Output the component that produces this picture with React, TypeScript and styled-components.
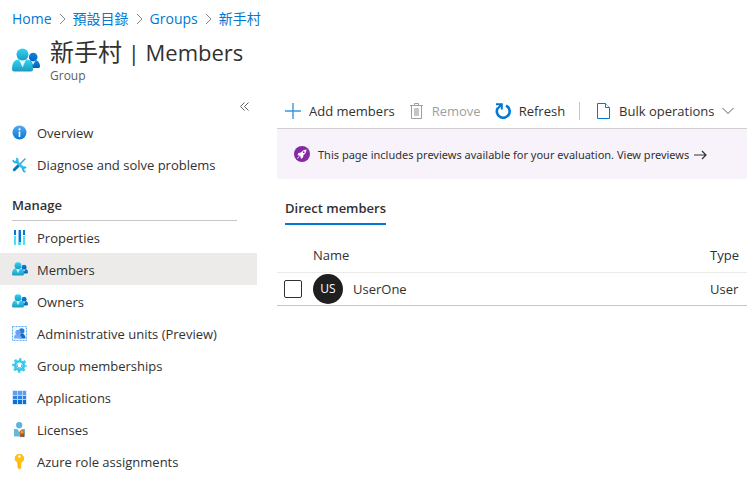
import React from "react";
import styled, { createGlobalStyle } from "styled-components";

const GlobalStyle = createGlobalStyle`
  *, *::before, *::after { box-sizing: border-box; }
  body {
    margin: 0;
    background: #fff;
    color: #323130;
    font-family: "Open Sans", "Noto Sans CJK TC", sans-serif;
    font-size: 13px;
    line-height: 20px;
    overflow-x: hidden;
  }
  button { font: inherit; color: inherit; background: none; border: 0; padding: 0; cursor: pointer; }
  a { color: inherit; text-decoration: none; }
  svg { display: block; flex: none; }
`;

const Breadcrumb = styled.nav`
  display: flex;
  align-items: center;
  gap: 7px;
  height: 38px;
  padding: 0 12px;
  color: #0078d4;
  font-size: 14px;
`;

const Header = styled.header`
  display: flex;
  align-items: flex-start;
  gap: 10px;
  height: 58px;
  padding-left: 12px;
`;

const HeaderIcon = styled.div`
  padding-top: 10px;
`;

const Title = styled.h1`
  margin: 0;
  font-size: 24px;
  line-height: 28px;
  font-weight: 400;
`;

const TitleSection = styled.span`
  font-size: 22px;
`;

const Subtitle = styled.div`
  font-size: 12px;
  line-height: 20px;
  color: #605e5c;
`;

const Body = styled.div`
  display: flex;
  align-items: flex-start;
  gap: 20px;
`;

const Sidebar = styled.nav`
  flex: none;
  width: 257px;
`;

const CollapseRow = styled.div`
  display: flex;
  justify-content: flex-end;
  height: 20px;
  padding-right: 7px;
`;

const NavItem = styled.a<{ $active?: boolean }>`
  display: flex;
  align-items: center;
  gap: 9px;
  height: 32px;
  padding: 2px 12px 0;
  background: ${(p) => (p.$active ? "#edebe9" : "transparent")};
`;

const NavHeading = styled.h2`
  margin: 0 20px 0 12px;
  padding-top: 15px;
  height: 41px;
  border-bottom: 1px solid #c8c6c4;
  font-size: 13px;
  line-height: 20px;
  font-weight: 600;
`;

const Main = styled.main`
  flex: 1;
  min-width: 0;
`;

const Toolbar = styled.div`
  display: flex;
  align-items: center;
  height: 33px;
  padding: 0 0 3px 8px;
  border-bottom: 1px solid #d2d0ce;
  overflow: hidden;
  white-space: nowrap;
`;

const Command = styled.button`
  display: flex;
  flex: none;
  align-items: center;
  gap: 8px;
  margin-right: 14px;
  &:disabled { color: #a19f9d; }
`;

const Divider = styled.span`
  flex: none;
  width: 1px;
  height: 18px;
  margin-right: 16px;
  background: #c8c6c4;
`;

const Banner = styled.div`
  display: flex;
  align-items: center;
  gap: 8px;
  height: 50px;
  padding-left: 17px;
  background: #f8f3fb;
  font-family: "Noto Sans", "Noto Sans CJK TC", sans-serif;
  font-size: 11px;
  white-space: nowrap;
`;

const BannerText = styled.span`
  padding-top: 2px;
`;

const BannerLink = styled.a`
  display: inline-flex;
  align-items: center;
  gap: 5px;
`;

const Tabs = styled.div`
  display: flex;
  padding: 19px 8px 0;
`;

const Tab = styled.button`
  height: 27px;
  padding-bottom: 5px;
  border-bottom: 2px solid #0078d4;
  font-weight: 600;
`;

const Table = styled.table`
  width: 100%;
  margin-top: 13px;
  table-layout: fixed;
  border-collapse: collapse;
  text-align: left;
  th { height: 34px; padding: 1px 0 0; font-weight: 500; border-bottom: 1px solid #edebe9; }
  td { height: 33px; padding: 0; border-bottom: 1px solid #c8c6c4; }
`;

const CheckColumn = styled.col` width: 36px; `;
const TypeColumn = styled.col` width: 37px; `;

const Checkbox = styled.input`
  display: block;
  appearance: none;
  width: 18px;
  height: 18px;
  margin: 0 0 0 7px;
  border: 1px solid #323130;
  border-radius: 2px;
  background: #fff;
  &:checked { background: #0078d4; }
`;

const Person = styled.a`
  display: flex;
  align-items: center;
  gap: 10px;
`;

const Avatar = styled.span`
  display: flex;
  align-items: center;
  justify-content: center;
  width: 30px;
  height: 30px;
  border-radius: 50%;
  background: #1f1f1f;
  color: #fff;
  font-size: 12px;
`;

const Crumb = () => (
  <svg width="7" height="12" viewBox="0 0 7 12" fill="none" stroke="#8a8886"><path d="M1 1l5 5-5 5" /></svg>
);

const People = ({ size = 16 }: { size?: number }) => (
  <svg width={size} height={size} viewBox="0 2 28 28">
    <defs>
      <linearGradient id="cyan" x2="0" y2="1"><stop stopColor="#32d4f5" /><stop offset="1" stopColor="#1b9bbf" /></linearGradient>
      <linearGradient id="blue" x2="0" y2="1"><stop stopColor="#0f83df" /><stop offset="1" stopColor="#0064bd" /></linearGradient>
    </defs>
    <path d="M15 22c0-5 2-8 4-8h4c3 0 5 3 5 6.500 0 1-1 1.500-2 1.500z" fill="url(#blue)" />
    <path d="M18.500 14h5.500l-3 5z" fill="#d8edfb" />
    <circle cx="21.200" cy="11" r="4.300" fill="url(#blue)" />
    <path d="M0 23.500C0 17 2.500 13.500 6.500 13.500h8c4 0 6.500 3.500 6.500 10 0 1.200-1 2-2 2H2c-1 0-2-.8-2-2z" fill="url(#cyan)" />
    <path d="M7 13.500h7l-3.500 8z" fill="#e0f7fc" />
    <circle cx="10.500" cy="8.500" r="6" fill="url(#cyan)" />
  </svg>
);

const Info = () => (
  <svg width="16" height="16" viewBox="0 0 16 16">
    <defs><linearGradient id="info" x2="0" y2="1"><stop stopColor="#58a8ed" /><stop offset="1" stopColor="#0878d3" /></linearGradient></defs>
    <circle cx="7.500" cy="7.500" r="7" fill="url(#info)" />
    <path d="M6.700 6.500h1.600V12H6.700z" fill="#fff" /><circle cx="7.500" cy="4.300" r="1.100" fill="#fff" />
  </svg>
);

const Tools = () => (
  <svg width="16" height="16" viewBox="0 0 16 16" fill="none" strokeLinecap="round">
    <path d="M13 2L6 9" stroke="#4f9cc9" strokeWidth="1.500" />
    <path d="M6.500 8.500L2.300 12.700" stroke="#0078c8" strokeWidth="3" />
    <path d="M4.500 4.500L11.500 11.500" stroke="#32bfe8" strokeWidth="2.600" />
    <path d="M1.300 3.700a2.600 2.600 0 0 0 3.400 1.600 2.600 2.600 0 0 0 .2-3.600M11 12.500c-.5-1.500 1-3 2.500-2M11.300 13.500c.2.600.7 1 1.500 1" stroke="#26b4e4" strokeWidth="1.800" />
  </svg>
);

const Properties = () => (
  <svg width="16" height="16" viewBox="0 0 16 16">
    <path d="M2 0h2v5H2zM6 0h3v12H6zM11 0h2v5h-2z" fill="#0078d4" />
    <path d="M2 6h2v9H2zM6 12h3v3H6zM11 6h2v9h-2z" fill="#4fdcf4" />
    <path d="M6 0h1v12H6z" fill="#8ec9ee" />
  </svg>
);

const AdminUnits = () => (
  <svg width="16" height="16" viewBox="0 0 16 16">
    <path d="M.5.5h14v14H.5z" fill="#eef7fe" stroke="#58b1f0" strokeDasharray="2 1" />
    <path d="M7 12.500c0-3 1-5 3-5s3.500 2 3.500 5z" fill="#1c67c5" /><circle cx="9.700" cy="5" r="2.700" fill="#2879d8" />
    <path d="M2 12.500c0-3 1-4.500 3.500-4.500S9 9.500 10 12.500z" fill="#78a9fa" /><circle cx="6" cy="6.300" r="2.600" fill="#6ba0f3" />
  </svg>
);

const Gear = () => (
  <svg width="16" height="16" viewBox="0 0 16 16" fill="none" stroke="#32c9ef">
    <circle cx="7.500" cy="7.500" r="6.100" strokeWidth="2.400" strokeDasharray="2.400 2.390" strokeDashoffset="1.200" />
    <circle cx="7.500" cy="7.500" r="4.300" strokeWidth="2.600" />
    <path d="M5.300 6.600a2.400 2.400 0 1 0 4.400 0" stroke="#159fcf" />
  </svg>
);

const Apps = () => (
  <svg width="16" height="16" viewBox="0 0 16 16">
    <path d="M.5.5h14v14H.5z" fill="#b5d5f8" />
    <path d="M1 1h4v4H1zM6 1h4v4H6zM11 1h3v4h-3z" fill="#5c9fee" />
    <path d="M1 6h4v3H1zM6 6h4v3H6zM11 6h3v3h-3z" fill="#337fe0" />
    <path d="M1 10h4v4H1zM6 10h4v4H6zM11 10h3v4h-3z" fill="#0873d2" />
  </svg>
);

const License = () => (
  <svg width="16" height="16" viewBox="0 0 16 16">
    <path d="M2 7l3 0 2.500 3L10 7h3v7.500H3q-1 0-1-1z" fill="#63b8dc" />
    <circle cx="7.200" cy="3.200" r="3.100" fill="#5bb4da" />
    <path d="M8.300 11h3.900v4.500l-1.900-1-2 1z" fill="#a94724" />
    <circle cx="10" cy="10.200" r="2.300" fill="#d8661b" /><circle cx="10" cy="10.200" r="1.100" fill="#ffad21" />
  </svg>
);

const Key = () => (
  <svg width="16" height="16" viewBox="0 0 16 16">
    <path d="M5.300 0h4.200L12 2.800v3.400L9.300 9v5L7.500 15.500 5.500 13.700V9L2.800 6.200V2.800z" fill="#ffc20e" />
    <path d="M6.700 8v5" stroke="#f3a313" /><circle cx="7.400" cy="2.500" r="1.200" fill="#fff" />
  </svg>
);

const Plus = () => (
  <svg width="16" height="16" viewBox="0 0 16 16" fill="none" stroke="#3a98df" strokeWidth="1.400"><path d="M8 0v16M0 8h16" /></svg>
);

const Trash = () => (
  <svg width="15" height="16" viewBox="0 0 15 16" fill="none" stroke="#a19f9d">
    <path d="M1 2.500h13M5.500 2.500v-2h4v2M2.500 2.500v13h10v-13" /><path d="M5.500 5.500h4v7h-4z" fill="#c8c6c4" stroke="#c8c6c4" />
  </svg>
);

const Refresh = () => (
  <svg width="16" height="16" viewBox="0 0 16 16" fill="none" stroke="#0078d4">
    <path d="M11 2.600A6.400 6.400 0 1 1 2.800 5" strokeWidth="2.600" /><path d="M1 1.200h5.800V6.500M6 2L2.800 5.500" strokeWidth="2" />
  </svg>
);

const File = () => (
  <svg width="15" height="16" viewBox="0 0 15 16" fill="#fff" stroke="#0078d4">
    <path d="M1.500.5h8l4 4v11h-12z" /><path d="M9.500.5v4h4" />
  </svg>
);

const Down = () => (
  <svg width="12" height="8" viewBox="0 0 12 8" fill="none" stroke="#605e5c"><path d="M.5 1L6 6.500 11.500 1" /></svg>
);

const Rocket = () => (
  <svg width="16" height="16" viewBox="0 0 16 16">
    <circle cx="8" cy="8" r="8" fill="#8428a5" />
    <path d="M12.500 3.500c-2 0-4 .9-5.500 3L4.500 7 3.300 9.200l2 .2 1.400 1.300.1 2.200L9 11.500l.5-2.400c2-1.500 3-3.500 3-5.600z" fill="#fff" />
    <path d="M5.200 10.400l-1.700 2" stroke="#fff" /><circle cx="9.700" cy="6.200" r=".9" fill="#8428a5" />
  </svg>
);

const Arrow = () => (
  <svg width="13" height="10" viewBox="0 0 13 10" fill="none" stroke="#323130" strokeWidth="1.200"><path d="M0 5h12M8 1l4 4-4 4" /></svg>
);

const manageItems = [
  { label: "Properties", icon: <Properties /> },
  { label: "Members", icon: <People />, active: true },
  { label: "Owners", icon: <People /> },
  { label: "Administrative units (Preview)", icon: <AdminUnits /> },
  { label: "Group memberships", icon: <Gear /> },
  { label: "Applications", icon: <Apps /> },
  { label: "Licenses", icon: <License /> },
  { label: "Azure role assignments", icon: <Key /> },
];

export default function App() {
  return (
    <>
      <GlobalStyle />
      <Breadcrumb aria-label="Breadcrumb">
        <a href="#home">Home</a><Crumb />
        <a href="#directory">預設目錄</a><Crumb />
        <a href="#groups">Groups</a><Crumb />
        <a href="#group">新手村</a>
      </Breadcrumb>
      <Header>
        <HeaderIcon><People size={28} /></HeaderIcon>
        <div>
          <Title>新手村<TitleSection> | Members</TitleSection></Title>
          <Subtitle>Group</Subtitle>
        </div>
      </Header>
      <Body>
        <Sidebar aria-label="Group">
          <CollapseRow>
            <button aria-label="Collapse menu">
              <svg width="10" height="9" viewBox="0 0 10 9" fill="none" stroke="#605e5c"><path d="M4.500.5l-4 4 4 4M8.500.5l-4 4 4 4" /></svg>
            </button>
          </CollapseRow>
          <NavItem href="#overview"><Info />Overview</NavItem>
          <NavItem href="#diagnose"><Tools />Diagnose and solve problems</NavItem>
          <NavHeading>Manage</NavHeading>
          {manageItems.map((item) => (
            <NavItem key={item.label} href="#manage" $active={item.active} aria-current={item.active ? "page" : undefined}>
              {item.icon}{item.label}
            </NavItem>
          ))}
        </Sidebar>
        <Main>
          <Toolbar>
            <Command><Plus />Add members</Command>
            <Command disabled><Trash />Remove</Command>
            <Command><Refresh />Refresh</Command>
            <Divider />
            <Command><File />Bulk operations<Down /></Command>
            <Divider />
          </Toolbar>
          <Banner>
            <Rocket />
            <BannerText>This page includes previews available for your evaluation. <BannerLink href="#previews">View previews <Arrow /></BannerLink></BannerText>
          </Banner>
          <Tabs role="tablist"><Tab role="tab" aria-selected="true">Direct members</Tab></Tabs>
          <Table>
            <colgroup><CheckColumn /><col /><TypeColumn /></colgroup>
            <thead><tr><th /><th>Name</th><th>Type</th></tr></thead>
            <tbody>
              <tr>
                <td><Checkbox type="checkbox" aria-label="Select UserOne" /></td>
                <td><Person href="#user"><Avatar>US</Avatar>UserOne</Person></td>
                <td>User</td>
              </tr>
            </tbody>
          </Table>
        </Main>
      </Body>
    </>
  );
}
